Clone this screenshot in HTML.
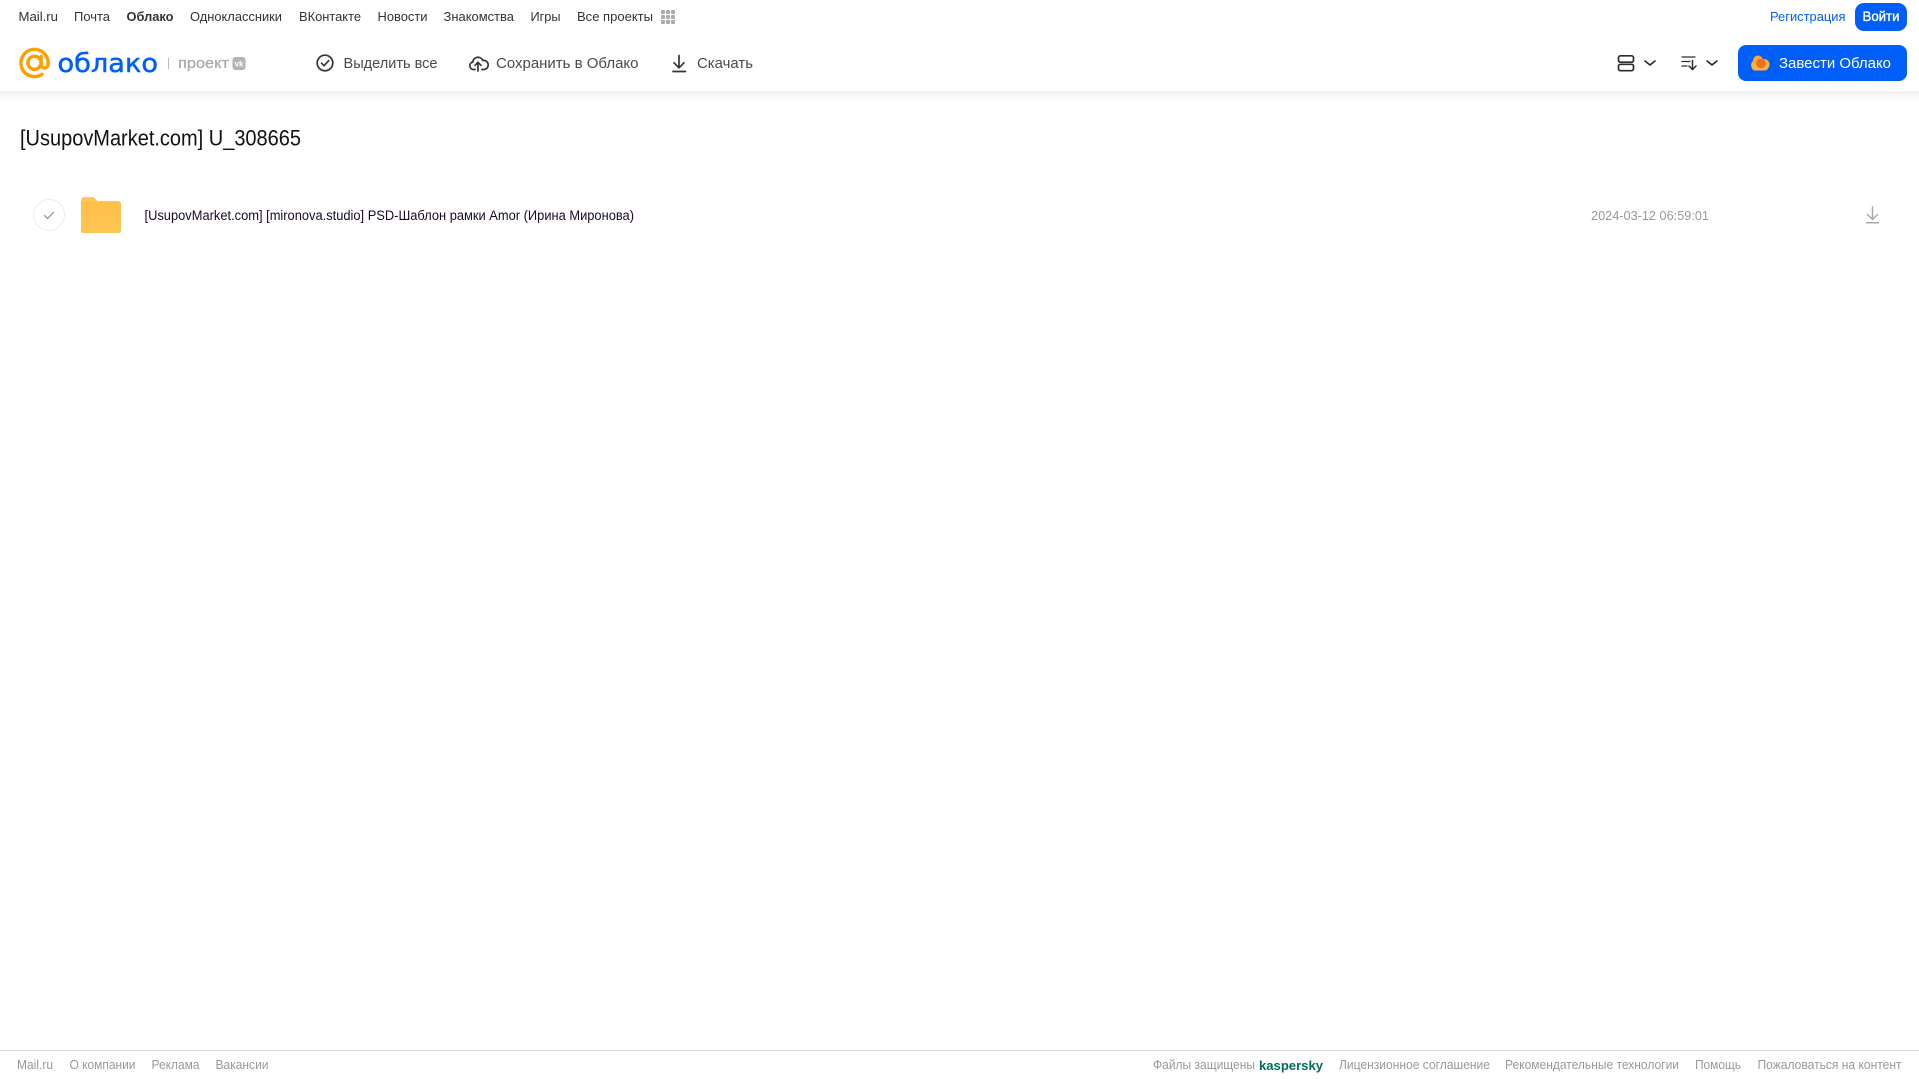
<!DOCTYPE html>
<html lang="ru"><head><meta charset="utf-8"><title>Облако</title>
<style>
html,body{margin:0;padding:0;background:#fff;width:1919px;height:1079px;overflow:hidden}
svg{display:block}
text{font-family:"Liberation Sans",Arial,sans-serif}
.n{font-size:13px;fill:#333}
.t{font-size:15px;fill:#4a4a4a}
.f{font-size:12.500px;fill:#999}
</style></head><body>
<svg width="1919" height="1079" viewBox="0 0 1919 1079" xmlns="http://www.w3.org/2000/svg">
<defs>
<linearGradient id="s" x1="0" y1="0" x2="0" y2="1"><stop offset="0" stop-color="#f1f1f1"/><stop offset="1" stop-color="#fff"/></linearGradient>
<linearGradient id="fo" x1="0" y1="0" x2="0" y2="1"><stop offset="0" stop-color="#ffbe47"/><stop offset="1" stop-color="#ffc655"/></linearGradient>
</defs>
<rect y="91" width="1919" height="10" fill="url(#s)"/>

<!-- top nav -->
<text class="n" x="18.500" y="21" textLength="39.500" lengthAdjust="spacingAndGlyphs">Mail.ru</text>
<text class="n" x="74" y="21" textLength="36" lengthAdjust="spacingAndGlyphs">Почта</text>
<text class="n" x="126.500" y="21" textLength="47" lengthAdjust="spacingAndGlyphs" style="font-weight:700">Облако</text>
<text class="n" x="190" y="21" textLength="92" lengthAdjust="spacingAndGlyphs">Одноклассники</text>
<text class="n" x="299" y="21" textLength="62" lengthAdjust="spacingAndGlyphs">ВКонтакте</text>
<text class="n" x="377.500" y="21" textLength="50" lengthAdjust="spacingAndGlyphs">Новости</text>
<text class="n" x="443.500" y="21" textLength="70.500" lengthAdjust="spacingAndGlyphs">Знакомства</text>
<text class="n" x="530.500" y="21" textLength="30" lengthAdjust="spacingAndGlyphs">Игры</text>
<text class="n" x="577" y="21" textLength="76" lengthAdjust="spacingAndGlyphs">Все проекты</text>
<g fill="#aaa">
<rect x="661" y="10" width="4" height="4" rx="1"/><rect x="666" y="10" width="4" height="4" rx="1"/><rect x="671" y="10" width="4" height="4" rx="1"/>
<rect x="661" y="15" width="4" height="4" rx="1"/><rect x="666" y="15" width="4" height="4" rx="1"/><rect x="671" y="15" width="4" height="4" rx="1"/>
<rect x="661" y="20" width="4" height="4" rx="1"/><rect x="666" y="20" width="4" height="4" rx="1"/><rect x="671" y="20" width="4" height="4" rx="1"/>
</g>

<text x="1770" y="21" font-size="13" fill="#005ff9" textLength="75.500" lengthAdjust="spacingAndGlyphs">Регистрация</text>
<rect x="1855" y="3" width="52" height="28" rx="9" fill="#005ff9"/>
<text x="1862.500" y="21" font-size="13.500" fill="#fff" stroke="#fff" stroke-width=".35" textLength="37" lengthAdjust="spacingAndGlyphs">Войти</text>

<!-- logo -->
<circle cx="34.500" cy="62.800" r="6.600" fill="none" stroke="#ff9e00" stroke-width="3.400"/>
<path d="M41.200 56.500v8a3.400 3.400 0 0 0 6.900 0v-1.700A13.600 13.600 0 1 0 42 74.300" fill="none" stroke="#ff9e00" stroke-width="3.400" stroke-linecap="round"/>
<text x="57.500" y="72" font-size="26" fill="#005ff9" stroke="#005ff9" stroke-width=".5" style="font-family:'DejaVu Sans',sans-serif" textLength="100.500" lengthAdjust="spacingAndGlyphs">облако</text>
<rect x="168" y="58" width="1" height="11" fill="#bbb"/>
<text x="178" y="68" font-size="15" fill="#a8a8a8" stroke="#a8a8a8" stroke-width=".25" textLength="51" lengthAdjust="spacingAndGlyphs">проект</text>
<rect x="232.500" y="57" width="13" height="13" rx="3" fill="#b3b3b3"/>
<text x="234.500" y="66.500" font-size="8" fill="#fff" style="font-weight:700" textLength="9" lengthAdjust="spacingAndGlyphs">vk</text>

<!-- toolbar -->
<g fill="none" stroke="#333" stroke-width="1.700" stroke-linecap="round" stroke-linejoin="round">
<circle cx="325" cy="63" r="7.800"/>
<path d="M321.500 63.200l2.500 2.500 4.700-5"/>
<path d="M475 69.500h-1.500a3.800 3.800 0 0 1-.7-7.500 5.200 5.200 0 0 1 10-1.500 4.500 4.500 0 0 1 1.700 9H482"/>
<path d="M478 71V62.500M475 65.300l3-3 3 3"/>
<path d="M679 55.500v12M674 62.800l5 5 5-5"/>
<path d="M673 71.500h12.500"/>
</g>
<text class="t" x="343.500" y="68" textLength="94" lengthAdjust="spacingAndGlyphs">Выделить все</text>
<text class="t" x="496" y="68" textLength="142.500" lengthAdjust="spacingAndGlyphs">Сохранить в Облако</text>
<text class="t" x="697" y="68" textLength="56" lengthAdjust="spacingAndGlyphs">Скачать</text>

<!-- right controls -->
<g fill="none" stroke="#2c2d2e" stroke-width="1.700" stroke-linecap="round" stroke-linejoin="round">
<rect x="1618.500" y="55.800" width="15" height="6.400" rx="2"/>
<rect x="1618.500" y="64.300" width="15" height="6.400" rx="2"/>
<path d="M1645 61l5 4 5-4"/>
<path d="M1707 61l5 4 5-4"/>
<path d="M1682 57h13M1682 61.500h8M1682 66h5" stroke-width="1.300"/>
<path d="M1692.500 60.500v8.500M1689 66l3.500 3.500L1696 66" stroke-width="1.500"/>
</g>
<rect x="1738" y="45" width="169" height="36" rx="8" fill="#005ff9"/>
<circle cx="1756" cy="65" r="5" fill="#ffb13d"/>
<circle cx="1758" cy="60.500" r="5" fill="#ffa726"/>
<circle cx="1764" cy="64.500" r="5.500" fill="#ffb13d"/>
<rect x="1752" y="64" width="16" height="6.500" rx="3" fill="#ffb340"/>
<circle cx="1761" cy="63.500" r="4.800" fill="#f26b21"/>
<text x="1779" y="68" font-size="15" fill="#fff" textLength="112" lengthAdjust="spacingAndGlyphs">Завести Облако</text>

<!-- title -->
<text x="20" y="145.500" font-size="22.500" fill="#111" textLength="281" lengthAdjust="spacingAndGlyphs">[UsupovMarket.com] U_308665</text>

<!-- row -->
<circle cx="49" cy="215" r="15.500" fill="#fff" stroke="#ececec" stroke-width="1"/>
<path d="M44.500 215.500l3 3 6-6" fill="none" stroke="#999" stroke-width="1.300" stroke-linecap="round" stroke-linejoin="round"/>
<path d="M81 200a3 3 0 0 1 3-3h8c2 0 2.500.8 3.500 2l2 2h20.500a3 3 0 0 1 3 3v6H81z" fill="#ffc65c"/>
<path d="M81 202h38a2 2 0 0 1 2 2v27a2 2 0 0 1-2 2H83a2 2 0 0 1-2-2z" fill="url(#fo)"/>
<text x="144.500" y="220" font-size="13.500" fill="#1a0a24" textLength="489.500" lengthAdjust="spacingAndGlyphs">[UsupovMarket.com] [mironova.studio] PSD-Шаблон рамки Amor (Ирина Миронова)</text>
<text x="1591" y="220" font-size="13" fill="#999" textLength="118" lengthAdjust="spacingAndGlyphs">2024-03-12 06:59:01</text>
<path d="M1872.500 207v12M1867.500 214.500l5 5 5-5M1866.500 222.800h12" fill="none" stroke="#aaa" stroke-width="1.500" stroke-linecap="round" stroke-linejoin="round"/>

<!-- footer -->
<rect y="1050" width="1919" height="1" fill="#d9d9d9"/>
<text class="f" x="17" y="1069" textLength="36" lengthAdjust="spacingAndGlyphs">Mail.ru</text>
<text class="f" x="69.500" y="1069" textLength="66" lengthAdjust="spacingAndGlyphs">О компании</text>
<text class="f" x="151.500" y="1069" textLength="48" lengthAdjust="spacingAndGlyphs">Реклама</text>
<text class="f" x="215.500" y="1069" textLength="53" lengthAdjust="spacingAndGlyphs">Вакансии</text>
<text class="f" x="1153" y="1069" textLength="102" lengthAdjust="spacingAndGlyphs">Файлы защищены</text>
<text x="1259" y="1070" font-size="13" fill="#006d5c" style="font-weight:700" textLength="64" lengthAdjust="spacingAndGlyphs">kaspersky</text>
<text class="f" x="1339" y="1069" textLength="151" lengthAdjust="spacingAndGlyphs">Лицензионное соглашение</text>
<text class="f" x="1505" y="1069" textLength="174" lengthAdjust="spacingAndGlyphs">Рекомендательные технологии</text>
<text class="f" x="1695" y="1069" textLength="46" lengthAdjust="spacingAndGlyphs">Помощь</text>
<text class="f" x="1757.500" y="1069" textLength="144" lengthAdjust="spacingAndGlyphs">Пожаловаться на контент</text>
</svg>
</body></html>
